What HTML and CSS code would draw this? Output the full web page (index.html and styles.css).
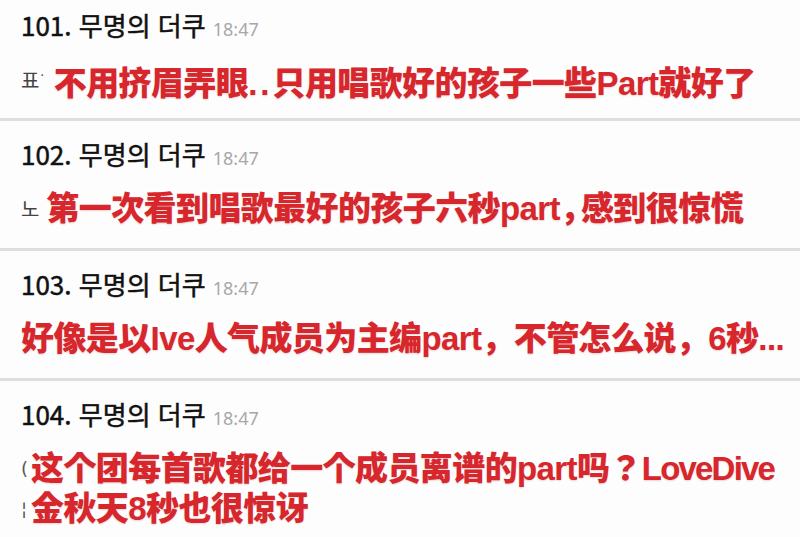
FILE: index.html
```html
<!DOCTYPE html>
<html lang="ko">

<head>
  <meta charset="UTF-8">
  <meta name="viewport" content="width=device-width, initial-scale=1.0">
  <title>무명의 더쿠</title>
  <link rel="stylesheet" href="styles.css">
</head>

<body>
  <div class="list">
    <div class="post first">
      <div class="head">101. 무명의 더쿠<span class="time">18:47</span></div>
      <div class="body">
        <div class="orig">표<span class="dot">·</span></div>
        <p class="cap">不用挤眉弄眼<span class="dots">..</span>只用唱歌好的孩子一些Part就好了</p>
      </div>
    </div>
    <div class="post">
      <div class="head">102. 무명의 더쿠<span class="time">18:47</span></div>
      <div class="body">
        <div class="orig">노</div>
        <p class="cap">第一次看到唱歌最好的孩子六秒part<span class="tight">，</span>感到很惊慌</p>
      </div>
    </div>
    <div class="post">
      <div class="head">103. 무명의 더쿠<span class="time">18:47</span></div>
      <div class="body">
        <p class="cap">好像是以Ive人气成员为主编part，不管怎么说，6秒...</p>
      </div>
    </div>
    <div class="post last">
      <div class="head">104. 무명의 더쿠<span class="time">18:47</span></div>
      <div class="body">
        <div class="orig two">
          <span>(</span>
          <span>¦</span>
        </div>
        <p class="cap">这个团每首歌都给一个成员离谱的part吗？<span class="narrow">LoveDive</span><br>金秋天8秒也很惊讶</p>
      </div>
    </div>
  </div>
</body>

</html>
```

FILE: styles.css
```css
body {
  margin: 0;
  background: #fff;
  font-family: "Noto Sans CJK KR", "Noto Sans", sans-serif;
}

.list {
  width: 800px;
}

/* 댓글 한 칸 */
.post {
  box-sizing: border-box;
  height: 130px;
  padding: 17px 0 0 21px;
  background: #fdfdfe;
  border-bottom: 3px solid #dedede;
}

.post.first {
  height: 121px;
  padding-top: 9px;
}

.post.last {
  height: 156px;
  border-bottom: 0;
}

.head {
  font-size: 26px;
  line-height: 32px;
  color: #111;
  -webkit-text-stroke: 0.5px #111;
}

.time {
  margin-left: 7px;
  font-family: "Noto Sans", sans-serif;
  font-size: 18px;
  color: #a8a8a8;
  -webkit-text-stroke: 0;
}

.body {
  display: flex;
  align-items: flex-start;
  margin-top: 15px;
}

.orig {
  margin-right: 7px;
  padding-top: 6px;
  font-size: 20px;
  line-height: 28px;
  color: #444;
}

.first .orig {
  margin-right: 10px;
}

.orig .dot {
  position: relative;
  top: -8px;
  margin-left: 1px;
  font-size: 12px;
}

.orig.two {
  display: flex;
  flex-direction: column;
  margin-right: 3px;
  padding-top: 0;
  font-family: "DejaVu Sans", sans-serif;
  font-size: 18px;
  line-height: 40px;
  color: #555;
}

/* 빨간 자막 */
.cap {
  margin: 0;
  font-family: "Liberation Sans", "Noto Sans CJK SC", sans-serif;
  font-size: 33px;
  font-weight: 900;
  line-height: 40px;
  color: #d7262c;
  letter-spacing: -0.6px;
  white-space: nowrap;
  -webkit-text-stroke: 5px #fff;
  paint-order: stroke fill;
  text-shadow: 0 1px 2px rgba(120, 0, 0, 0.18);
}

.cap .dots {
  letter-spacing: 3px;
}

.cap .tight {
  letter-spacing: -12px;
}

.cap .narrow {
  letter-spacing: -1.8px;
}

.first .cap {
  margin-top: 4px;
}
```
